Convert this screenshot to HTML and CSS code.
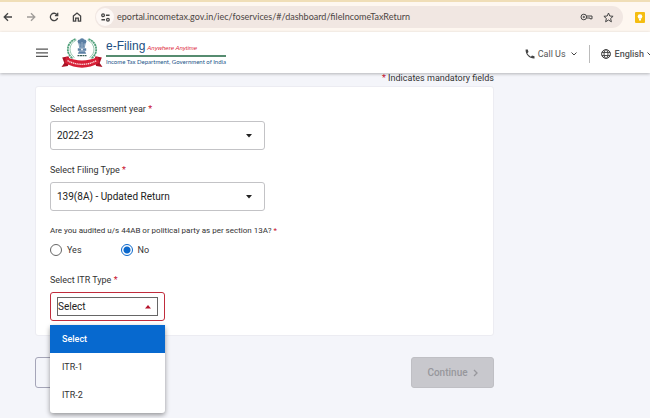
FILE: index.html
```html
<!DOCTYPE html>
<html lang="en">
<head>
<meta charset="utf-8">
<title>e-Filing</title>
<link rel="stylesheet" href="styles.css">
</head>
<body>
<div class="toolbar">
  <button class="tool" aria-label="Back"><svg width="10" height="10" viewBox="0 0 10 10"><path d="M9 5H1.5M5 1.2L1.2 5 5 8.8"/></svg></button>
  <button class="tool muted" aria-label="Forward"><svg width="10" height="10" viewBox="0 0 10 10"><path d="M1 5h7.5M5 1.2L8.8 5 5 8.8"/></svg></button>
  <button class="tool" aria-label="Reload"><svg width="10" height="10" viewBox="0 0 10 10"><path d="M8.2 3A3.7 3.7 0 1 0 8.6 6M8.7 .8v2.8H5.9"/></svg></button>
  <button class="tool" aria-label="Home"><svg width="10" height="10" viewBox="0 0 10 10"><path d="M1.4 4L5 1l3.6 3v5.2H6.3V6.1H3.7v3.1H1.4z"/></svg></button>
  <div class="omnibox">
    <button class="site" aria-label="Site information"><svg width="9" height="9" viewBox="0 0 10 10"><path d="M5.5 2.5H9.5M.5 7.5h4"/><circle cx="2.3" cy="2.5" r="1.5"/><circle cx="7.7" cy="7.5" r="1.5"/></svg></button>
    <input class="url" type="text" aria-label="Address" value="eportal.incometax.gov.in/iec/foservices/#/dashboard/fileIncomeTaxReturn">
    <button class="mark" aria-label="Passwords"><svg width="13" height="10" viewBox="0 0 13 10"><circle cx="3.8" cy="5" r="2.8"/><circle cx="3.8" cy="5" r=".7"/><path d="M6.6 4h5.4v2.8h-2V6H6.6"/></svg></button>
    <button class="mark" aria-label="Bookmark"><svg width="11" height="11" viewBox="0 0 11 11"><path d="M5.5 1l1.3 3 3.3.3-2.5 2.2.8 3.3-2.9-1.8-2.9 1.8.8-3.3L.9 4.3 4.2 4z"/></svg></button>
  </div>
  <button class="keep" aria-label="Notes"><svg width="10" height="11" viewBox="0 0 10 11"><rect width="10" height="11" rx="1" fill="#f5bd10"/><circle cx="5" cy="4.6" r="2.3" fill="#fff"/><path d="M4 7h2v1.6H4z" fill="#fff"/></svg></button>
</div>

<header class="header">
  <button class="burger" aria-label="Menu"><svg width="12" height="10" viewBox="0 0 12 10"><path d="M0 1.2h12M0 4.8h12M0 8.4h12"/></svg></button>
  <a class="brand" href="#">
    <svg width="42" height="32" viewBox="0 0 42 32" aria-hidden="true">
      <g fill="none" stroke="#4fa07a">
        <path d="M14.5 2C5 5.500 4.500 17 12 21.500M27.500 2C37 5.500 37.500 17 30 21.500" stroke-width="1.800" stroke-dasharray="2.200 .5"/>
        <path d="M15.500 3C7.500 6.500 7 16 13.500 20.500M26.500 3c8 3.500 8.500 13.500 2 17.500" stroke-width=".6"/>
      </g>
      <g fill="#5b7fa4" stroke="none">
        <circle cx="18.600" cy="4.400" r="2"/><circle cx="21" cy="3.400" r="2.200"/><circle cx="23.400" cy="4.400" r="2"/>
        <path d="M17.300 5.500h7.400l-.9 5.200h-5.600z"/>
        <path d="M16.800 11.300h8.400v2.500h-8.400z"/>
        <path d="M18 14.300h6l1.200 2.500h-8.400z"/>
      </g>
      <path d="M18.800 6.500v3.300M21 6.200v3.800M23.200 6.500v3.300" stroke="#dbe6ef" stroke-width=".6"/>
      <circle cx="21" cy="12.500" r=".9" fill="#fff" stroke="none"/>
      <path d="M16.500 18.700h9" stroke="#385d54" stroke-width="1.300" stroke-dasharray="2 .5"/>
      <g stroke="none">
        <path d="M1.200 20.500l6.300-1.300 1.500 4.500-2.200 5.200-6.300 1 2.800-4z" fill="#a91326"/>
        <path d="M40.800 20.500l-6.300-1.300-1.500 4.500 2.200 5.200 6.300 1-2.800-4z" fill="#a91326"/>
        <path d="M5 19.800Q21 27.300 37 19.800l1.300 6Q21 35.500 3.700 25.800z" fill="#d71f36"/>
      </g>
      <path d="M6.500 23.700Q21 31 35.500 23.700" fill="none" stroke="#fbd9db" stroke-width="1.400" stroke-dasharray="1.300 .6"/>
    </svg>
    <span class="wordmark">
      <span class="title"><b>e-Filing</b><i>Anywhere Anytime</i></span>
      <span class="dept">Income Tax Department, Government of India</span>
    </span>
  </a>
  <nav class="links">
    <button class="link"><svg width="10" height="10" viewBox="0 0 10 10"><path d="M.6.6h2.200l.7 2.500-1.200 1.100Q3.600 6.700 5.900 7.800L7 6.600l2.500.7v2.200C4.500 9.800.3 5.700.6.600z" fill="#444" stroke="none"/></svg>Call Us<svg class="chev" width="6" height="4" viewBox="0 0 6 4"><path d="M.5.5L3 3 5.500.5"/></svg></button>
    <button class="link lang"><svg width="10" height="10" viewBox="0 0 10 10"><circle cx="5" cy="5" r="4.400"/><ellipse cx="5" cy="5" rx="2" ry="4.400"/><path d="M.8 3.400h8.400M.8 6.600h8.400"/></svg>English<svg class="chev" width="6" height="4" viewBox="0 0 6 4"><path d="M.5.5L3 3 5.500.5"/></svg></button>
  </nav>
</header>

<main class="main">
  <p class="note"><em>*</em> Indicates mandatory fields</p>
  <form class="card">
    <div class="field">
      <label for="year">Select Assessment year <em>*</em></label>
      <div class="box"><select id="year"><option>2022-23</option></select><svg width="6" height="4" viewBox="0 0 6 4"><path d="M0 0h6L3 3.500z"/></svg></div>
    </div>
    <div class="field">
      <label for="type">Select Filing Type <em>*</em></label>
      <div class="box"><select id="type"><option>139(8A) - Updated Return</option></select><svg width="6" height="4" viewBox="0 0 6 4"><path d="M0 0h6L3 3.500z"/></svg></div>
    </div>
    <fieldset class="audit">
      <legend>Are you audited u/s 44AB or political party as per section 13A? <em>*</em></legend>
      <div class="choices">
        <label><input type="radio" name="audit">Yes</label>
        <label><input type="radio" name="audit" checked>No</label>
      </div>
    </fieldset>
    <div class="field itr">
      <label for="itr">Select ITR Type <em>*</em></label>
      <div class="box invalid"><select id="itr"><option>Select</option></select><svg width="6" height="4" viewBox="0 0 6 4"><path d="M0 3.500h6L3 0z"/></svg></div>
      <ul class="menu" role="listbox" aria-label="ITR type">
        <li class="active" role="option" aria-selected="true">Select</li>
        <li role="option">ITR-1</li>
        <li role="option">ITR-2</li>
      </ul>
    </div>
  </form>
  <div class="actions">
    <button class="back" aria-label="Back"></button>
    <button class="continue" disabled>Continue<svg width="5" height="8" viewBox="0 0 5 8"><path d="M1 1l3 3-3 3"/></svg></button>
  </div>
</main>
</body>
</html>
```
FILE: styles.css
```css
* { box-sizing: border-box; }

body {
  margin: 0;
  min-height: 100vh;
  overflow: hidden;
  background: #f4f5fa;
  color: #333;
  font-family: Roboto, sans-serif;
  font-size: 9px;
  line-height: 12px;
}

button {
  display: flex;
  align-items: center;
  justify-content: center;
  padding: 0;
  border: 0;
  background: none;
  color: inherit;
  font: inherit;
}

svg { flex: none; fill: none; stroke: #444; }
em { color: #c8102e; font-style: normal; }

.toolbar {
  display: flex;
  align-items: center;
  height: 32px;
  padding: 0 5px 0 3px;
  border-top: 2px solid #f0deb7;
  background: #fef7f0;
}
.tool { width: 10px; margin-right: 13px; }
.tool svg { stroke-width: 1.3; }
.muted { opacity: .5; }
.omnibox {
  display: flex;
  flex: 1;
  align-items: center;
  gap: 10px;
  height: 22px;
  padding: 0 9px 0 1px;
  border-radius: 11px;
  background: #f1e7e2;
}
.site {
  width: 18px;
  height: 18px;
  border-radius: 50%;
  background: #fdf8f5;
}
.site svg { stroke-width: 1.4; }
.url {
  flex: 1;
  min-width: 0;
  margin-left: -7px;
  padding: 0;
  border: 0;
  background: none;
  color: #4c4543;
  font: 9px/12px Lato, sans-serif;
}
.keep { margin-left: 12px; }
.keep svg { stroke: none; }

.header {
  position: relative;
  z-index: 1;
  display: flex;
  align-items: center;
  height: 41px;
  padding-left: 36px;
  background: #fff;
  box-shadow: 0 1px 3px #0004;
}
.burger svg { stroke: #555; stroke-width: 1.3; }
.brand {
  display: flex;
  align-items: center;
  gap: 3px;
  margin-left: 13px;
  text-decoration: none;
}
.wordmark { white-space: nowrap; }
.title {
  display: flex;
  align-items: baseline;
  gap: 2px;
  border-bottom: 2px solid #568c70;
  font-family: "Liberation Sans", sans-serif;
  line-height: 14px;
}
.title b { color: #214f82; font-size: 12px; font-weight: 400; }
.title i { color: #dc2637; font-size: 6px; }
.dept {
  display: block;
  color: #225589;
  font-family: Lato, sans-serif;
  font-size: 6px;
  line-height: 10px;
}
.links {
  display: flex;
  margin-left: auto;
  margin-right: -3px;
  padding-top: 3px;
  color: #555;
}
.link { gap: 3px; height: 18px; white-space: nowrap; }
.chev { margin-left: 2px; }
.lang { margin-left: 12px; padding-left: 11px; border-left: 1px solid #bbb; gap: 4px; font-weight: 500; }
.lang .chev { margin-left: -1px; }

.main { width: 76%; padding-left: 35px; }
.note { margin: 0; line-height: 10px; padding-bottom: 3px; text-align: right; }
.card {
  padding: 16px 14px 14px;
  border: 1px solid #ececf2;
  border-radius: 3px;
  background: #fff;
}
.field { position: relative; width: 215px; margin-bottom: 14px; }
.field > label { display: block; margin-bottom: 6px; }
.box {
  display: flex;
  align-items: center;
  height: 29px;
  padding: 0 12px 0 6px;
  border: 1px solid #c3c3c6;
  border-radius: 3px;
}
select {
  flex: 1;
  min-width: 0;
  padding: 0;
  border: 0;
  background: none;
  color: #222;
  font: 10px/16px Roboto, sans-serif;
  appearance: none;
}
.box svg { fill: #222; stroke: none; }

.audit { margin: 0; padding: 0; border: 0; }
.audit legend { padding: 0; font-size: 8px; white-space: nowrap; }
.choices { display: flex; gap: 39px; margin: 7px 0 18px; }
.choices label { display: flex; align-items: center; gap: 5px; }
input[type="radio"] {
  width: 12px;
  height: 12px;
  margin: 0;
  border: 1px solid #666;
  border-radius: 50%;
  appearance: none;
}
input[type="radio"]:checked {
  border-color: #0b68cc;
  background: radial-gradient(circle, #0b68cc 3px, #fff 4px);
}

.itr { width: 115px; margin-bottom: 0; }
.invalid { padding: 0 6px; border-color: #c02c3c; }
.invalid select { height: 19px; padding-right: 18px; border: 1px solid #666; }
.invalid svg { margin: 0 7px 0 -13px; fill: #b5142c; }
.menu {
  position: absolute;
  top: 100%;
  left: 0;
  width: 100%;
  margin: 4px 0 0;
  padding: 0 0 4px;
  border-radius: 3px;
  background: #fff;
  box-shadow: 0 2px 5px #0006;
  list-style: none;
}
.menu li { padding: 0 12px; line-height: 28px; }
.menu .active { background: #0769cf; color: #fff; font-weight: 500; }

.actions { display: flex; justify-content: space-between; margin-top: 21px; }
.back { width: 83px; height: 31px; border: 1px solid #a5a5b8; border-radius: 3px; }
.continue {
  gap: 5px;
  width: 83px;
  height: 31px;
  border: 1px solid #bfbfc4;
  border-radius: 3px;
  background: #c8c8cd;
  color: #97979c;
  font-size: 10px;
  font-weight: 500;
}
.continue svg { stroke: #97979c; stroke-width: 1.3; }
```
